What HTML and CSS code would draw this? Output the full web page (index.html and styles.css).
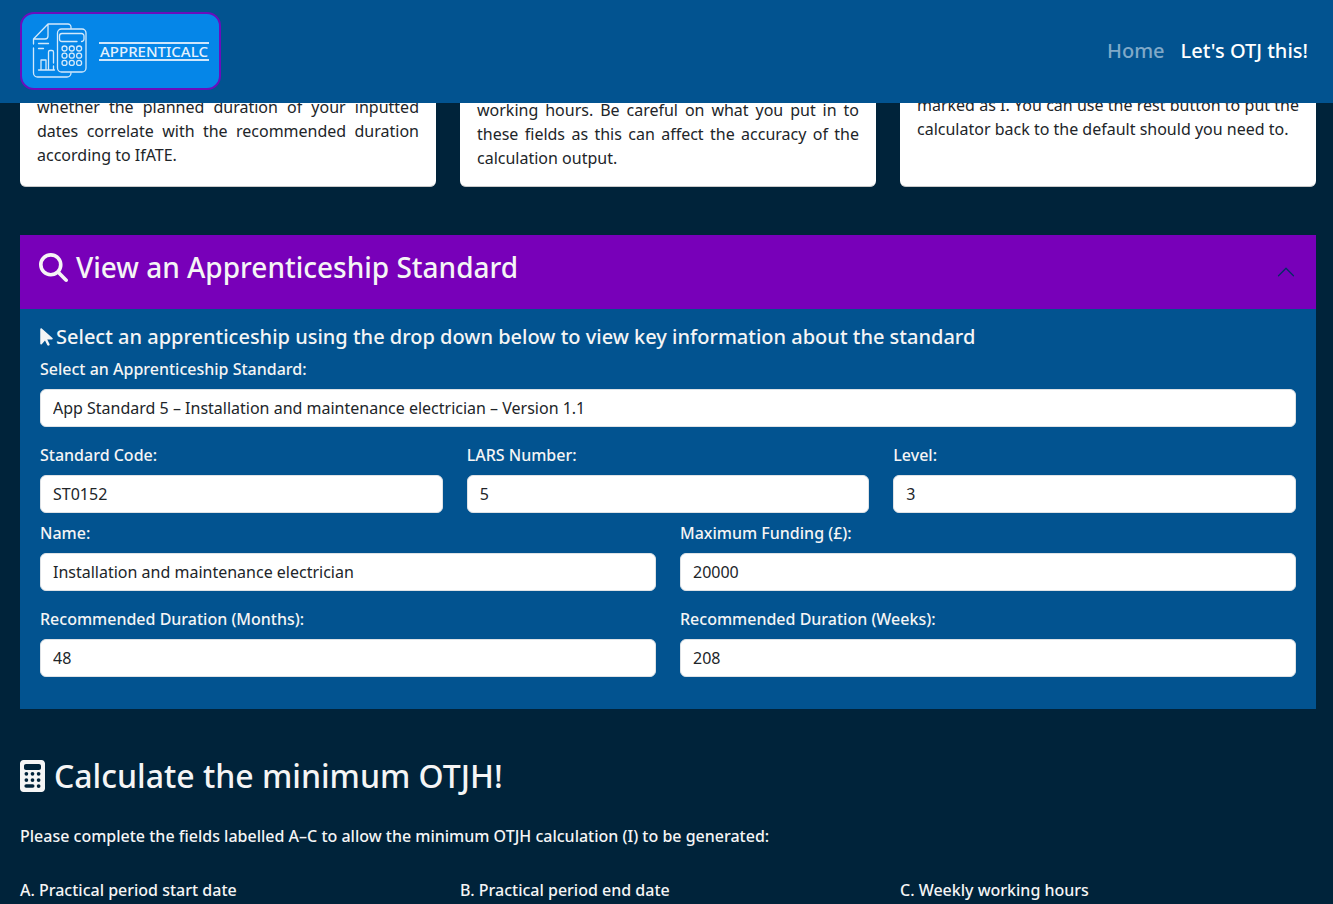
FILE: index.html
```html
<!DOCTYPE html>
<html lang="en">
<head>
<meta charset="utf-8">
<title>Apprenticalc</title>
<link rel="stylesheet" href="styles.css">
</head>
<body>
<header class="navbar">
  <a class="brand" href="#" aria-label="Apprenticalc">
    <svg class="brand-icon" width="56" height="56" viewBox="0 0 56 56" fill="none" stroke="#d3e9fb" stroke-width="1.300" stroke-linecap="round" stroke-linejoin="round">
      <path d="M39 5.500V4a3 3 0 0 0-3-3H16L1.500 16v5M16 1v12a3 3 0 0 1-3 3H1.500M1.500 25v25a4 4 0 0 0 4 4H35a4 4 0 0 0 4-4"/>
      <rect x="25.500" y="6" width="28.500" height="43" rx="4"/>
      <path d="M45 18.500H30a2.500 2.500 0 0 1-2.500-2.500v-3a2.500 2.500 0 0 1 2.500-2.500h19.500a2.500 2.500 0 0 1 2.500 2.500v3a2.500 2.500 0 0 1-2.500 2.500"/>
      <path d="M6.500 20.500h10M6.500 25.500h5M6.500 47h16M9 46v-9h5v9M16.500 46V29a1.500 1.500 0 0 1 1.500-1.500h2a1.500 1.500 0 0 1 1.500 1.500v11M21.500 43v3"/>
      <g><circle cx="32.500" cy="25.500" r="2.500"/><circle cx="39.800" cy="25.500" r="2.500"/><circle cx="47.100" cy="25.500" r="2.500"/><circle cx="32.500" cy="32.700" r="2.500"/><circle cx="39.800" cy="32.700" r="2.500"/><circle cx="47.100" cy="32.700" r="2.500"/><circle cx="32.500" cy="39.900" r="2.500"/><circle cx="39.800" cy="39.900" r="2.500"/><circle cx="47.100" cy="39.900" r="2.500"/></g>
    </svg>
    <span class="brand-name">APPRENTICALC</span>
  </a>
  <nav class="nav">
    <a class="nav-link" href="#">Home</a>
    <a class="nav-link active" href="#">Let's OTJ this!</a>
  </nav>
</header>
<main class="page">
  <section class="cards">
    <p class="card"><span>whether the planned duration of your inputted</span><span>dates correlate with the recommended duration</span><span>according to IfATE.</span></p>
    <p class="card card-hours"><span>working hours. Be careful on what you put in to</span><span>these fields as this can affect the accuracy of the</span><span>calculation output.</span></p>
    <p class="card card-reset"><span>marked as I. You can use the rest button to put the</span><span>calculator back to the default should you need to.</span></p>
  </section>

  <section class="accordion">
    <h2 class="accordion-header">
      <button class="accordion-button" type="button" aria-expanded="true">
        <svg width="29" height="29" viewBox="0 0 512 512" fill="currentColor"><path d="M416 208c0 45.900-14.900 88.300-40 122.700L502.600 457.400c12.500 12.500 12.500 32.800 0 45.300s-32.800 12.500-45.300 0L330.700 376c-34.400 25.200-76.800 40-122.700 40C93.100 416 0 322.900 0 208S93.100 0 208 0S416 93.100 416 208zM208 352a144 144 0 1 0 0-288 144 144 0 1 0 0 288z"/></svg>
        <span>View an Apprenticeship Standard</span>
        <svg class="chevron" width="20" height="20" viewBox="0 0 16 16" fill="#052c65"><path fill-rule="evenodd" d="M14.354 11.354a.5.5 0 0 1-.708 0L8 5.707l-5.646 5.647a.5.5 0 0 1-.708-.708l6-6a.5.5 0 0 1 .708 0l6 6a.5.5 0 0 1 0 .708"/></svg>
      </button>
    </h2>
    <form class="accordion-body">
      <h3 class="hint">
        <svg width="13" height="20" viewBox="0 0 320 512" fill="currentColor"><path d="M0 55.200V426c0 12.200 9.900 22 22 22c6.300 0 12.400-2.700 16.600-7.500L121.200 346l58.100 116.300c7.900 15.800 27.100 22.200 42.900 14.300s22.200-27.100 14.300-42.900L179.800 320H297.900c12.200 0 22.100-9.900 22.100-22.100c0-6.300-2.700-12.300-7.400-16.500L38.600 37.900C34.300 34.100 28.900 32 23.200 32C10.400 32 0 42.400 0 55.200z"/></svg>
        <span>Select an apprenticeship using the drop down below to view key information about the standard</span>
      </h3>
      <div class="field"><label for="std">Select an Apprenticeship Standard:</label>
        <select id="std" class="control"><option>App Standard 5 – Installation and maintenance electrician – Version 1.1</option></select></div>
      <div class="row thirds">
        <div class="field"><label for="code">Standard Code:</label><input id="code" class="control" value="ST0152"></div>
        <div class="field"><label for="lars">LARS Number:</label><input id="lars" class="control" value="5"></div>
        <div class="field"><label for="level">Level:</label><input id="level" class="control" value="3"></div>
      </div>
      <div class="row halves close">
        <div class="field"><label for="name">Name:</label><input id="name" class="control" value="Installation and maintenance electrician"></div>
        <div class="field"><label for="fund">Maximum Funding (£):</label><input id="fund" class="control" value="20000"></div>
      </div>
      <div class="row halves">
        <div class="field"><label for="months">Recommended Duration (Months):</label><input id="months" class="control" value="48"></div>
        <div class="field"><label for="weeks">Recommended Duration (Weeks):</label><input id="weeks" class="control" value="208"></div>
      </div>
    </form>
  </section>

  <section class="calc">
    <h2 class="calc-title">
      <svg width="25" height="32" viewBox="0 0 400 512" fill="currentColor"><path fill-rule="evenodd" d="M56 0C25 0 0 25 0 56V456c0 31 25 56 56 56H344c31 0 56-25 56-56V56c0-31-25-56-56-56H56zM96 64H304c18 0 32 14 32 32v32c0 18-14 32-32 32H96c-18 0-32-14-32-32V96c0-18 14-32 32-32zM72 220a30 30 0 1 0 60 0a30 30 0 1 0-60 0zM170 220a30 30 0 1 0 60 0a30 30 0 1 0-60 0zM268 220a30 30 0 1 0 60 0a30 30 0 1 0-60 0zM72 320a30 30 0 1 0 60 0a30 30 0 1 0-60 0zM170 320a30 30 0 1 0 60 0a30 30 0 1 0-60 0zM268 320a30 30 0 1 0 60 0a30 30 0 1 0-60 0zM98 388H204a28 28 0 0 1 0 56H98a28 28 0 0 1 0-56zM268 416a30 30 0 1 0 60 0a30 30 0 1 0-60 0z"/></svg>
      <span>Calculate the minimum OTJH!</span>
    </h2>
    <p class="lead">Please complete the fields labelled A–C to allow the minimum OTJH calculation (I) to be generated:</p>
    <div class="steps">
      <span>A. Practical period start date</span>
      <span>B. Practical period end date</span>
      <span>C. Weekly working hours</span>
    </div>
  </section>
</main>
</body>
</html>
```
FILE: styles.css
```css
* { box-sizing: border-box; }
body {
  margin: 0;
  background: #00233a;
  color: #f5f5f5;
  font: 400 16px/24px "Noto Sans", sans-serif;
}
h2, h3, p { margin: 0; }
svg { flex: none; }
.navbar {
  position: fixed;
  inset: 0 0 auto;
  z-index: 1;
  display: flex;
  justify-content: space-between;
  align-items: center;
  padding: 12px 25px 13px 20px;
  background: #025390;
}
.brand {
  display: flex;
  align-items: center;
  gap: 11px;
  height: 78px;
  padding: 0 10px;
  border: 2px solid #6a0dbd;
  border-radius: 14px;
  background: #0586e8;
  color: #e4f1fd;
  text-decoration: none;
}
.brand-name {
  padding: 0 1px;
  border-top: 2px solid #cfe6fb;
  border-bottom: 2px solid #cfe6fb;
  font: 500 15px/15px "Noto Sans", sans-serif;
}
.nav { display: flex; gap: 16px; font-size: 20px; font-weight: 500; }
.nav-link { color: #80a9c8; text-decoration: none; }
.nav-link.active { color: #fff; }
.page { padding: 79px 17px 0 20px; }
.cards { display: grid; grid-template-columns: repeat(3, 1fr); gap: 24px; }
.card {
  min-height: 108px;
  padding: 16px 17px;
  border-radius: 6px;
  border-bottom: 1px solid #c9c9c9;
  background: #fff;
  color: #212529;
}
.card-hours { padding-top: 19px; }
.card-reset { padding-top: 14px; }
.card span { display: block; white-space: nowrap; text-align-last: justify; }
.card span:last-child { text-align-last: left; }
.accordion { margin-top: 48px; background: #025390; }
.accordion-button {
  display: flex;
  align-items: center;
  gap: 8px;
  width: 100%;
  padding: 13px 20px 23px 19px;
  border: 0;
  background: #7800b9;
  color: #f5f5f5;
  font: 500 28px/38px "Noto Sans", sans-serif;
}
.chevron { margin: 10px 0 0 auto; }
.accordion-body { padding: 16px 20px 32px; }
.hint { display: flex; align-items: center; gap: 3px; margin-bottom: 8px; font-size: 20px; line-height: 24px; font-weight: 500; }
.field { display: flex; flex-direction: column; gap: 8px; min-width: 0; }
label, .lead, .steps { font-weight: 500; }
.control {
  appearance: none;
  width: 100%;
  height: 38px;
  padding: 0 12px;
  border: 1px solid #dee2e6;
  border-radius: 6px;
  background: #fff;
  color: #212529;
  font: inherit;
}
.row { display: grid; gap: 24px; margin-top: 16px; }
.thirds { grid-template-columns: repeat(3, 1fr); }
.halves { grid-template-columns: repeat(2, 1fr); }
.close { margin-top: 8px; }
.calc { padding-top: 48px; }
.calc-title { display: flex; align-items: center; gap: 9px; font-size: 32px; line-height: 38px; font-weight: 500; }
.lead { margin-top: 29px; }
.steps { display: grid; grid-template-columns: repeat(3, 1fr); gap: 24px; margin-top: 30px; }
```
